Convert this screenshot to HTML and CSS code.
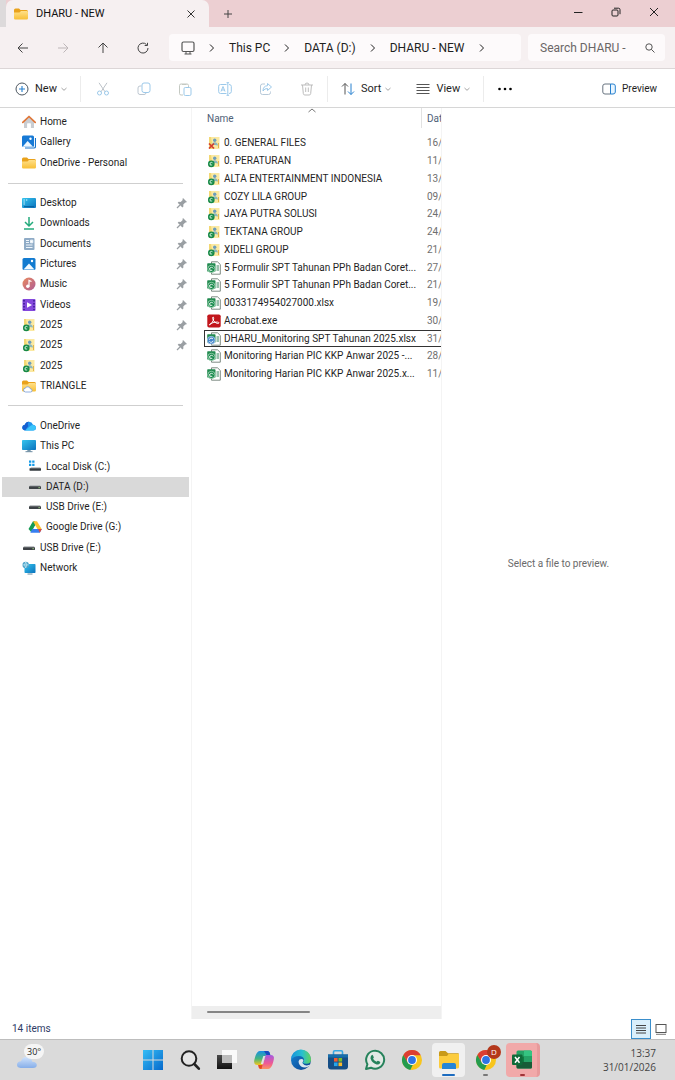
FILE: index.html
```html
<!DOCTYPE html>
<html lang="en">
<head>
<meta charset="utf-8">
<meta name="viewport" content="width=device-width, initial-scale=1">
<title>DHARU - NEW</title>
<link rel="stylesheet" href="styles.css">
</head>
<body>
<svg class="sprite" aria-hidden="true">
  <defs>
    <linearGradient id="g-folder" x1="0" y1="0" x2="0" y2="1"><stop offset="0" stop-color="#ffe08a"/><stop offset="1" stop-color="#f8bf36"/></linearGradient>
    <linearGradient id="g-blue" x1="0" y1="0" x2="1" y2="1"><stop offset="0" stop-color="#36c5ee"/><stop offset="1" stop-color="#0a72bd"/></linearGradient>
    <linearGradient id="g-music" x1="0" y1="0" x2="1" y2="1"><stop offset="0" stop-color="#ea8a5e"/><stop offset="1" stop-color="#ae5c96"/></linearGradient>
    <linearGradient id="g-win" x1="0" y1="0" x2="1" y2="1"><stop offset="0" stop-color="#35bdf5"/><stop offset="1" stop-color="#0669cc"/></linearGradient>
    <linearGradient id="g-edge" x1="0" y1="0" x2="1" y2="0"><stop offset="0" stop-color="#1593dc"/><stop offset=".55" stop-color="#28bfd0"/><stop offset="1" stop-color="#62d45c"/></linearGradient>
    <linearGradient id="g-edge2" x1="0" y1="0" x2="1" y2="1"><stop offset="0" stop-color="#1686d5"/><stop offset="1" stop-color="#0b3f8c"/></linearGradient>
    <linearGradient id="g-cop1" x1="0" y1="0" x2="0" y2="1"><stop offset="0" stop-color="#178ee5"/><stop offset=".55" stop-color="#46b67d"/><stop offset="1" stop-color="#f4c51c"/></linearGradient>
    <linearGradient id="g-cop2" x1="0" y1="0" x2="0" y2="1"><stop offset="0" stop-color="#a45ae0"/><stop offset=".6" stop-color="#ef5a94"/><stop offset="1" stop-color="#fb9360"/></linearGradient>
    <linearGradient id="g-cloud" x1="0" y1="0" x2="0" y2="1"><stop offset="0" stop-color="#cfe2fb"/><stop offset="1" stop-color="#86aee9"/></linearGradient>
    <linearGradient id="g-task" x1="0" y1="0" x2="0" y2="1"><stop offset="0" stop-color="#4a4a4a"/><stop offset="1" stop-color="#111"/></linearGradient>
  </defs>
  <symbol id="i-folder" viewBox="0 0 14 14"><path d="M0 3q0-1.500 1.500-1.500h3.500l1.500 1.500h6q1.500 0 1.500 1.500v2H0z" fill="#e9a21c"/><path d="M0 5.500h5.500L7 4h5.800Q14 4 14 5.200v6q0 1.300-1.300 1.300H1.300Q0 12.500 0 11.200z" fill="url(#g-folder)"/></symbol>
  <symbol id="i-home" viewBox="0 0 14 14"><path d="M2 6.500 7 2l5 4.500V13H8.700V8.500H5.300V13H2z" fill="#c9cdd2"/><path d="M5.300 8.500h3.400V13H5.300z" fill="#fff"/><path d="M.8 7.300 7 1.500l6.200 5.800" fill="none" stroke="#df7536" stroke-width="1.700" stroke-linecap="round" stroke-linejoin="round"/></symbol>
  <symbol id="i-gallery" viewBox="0 0 14 14"><path d="M3 13h9q1.500 0 1.500-1.500V3" fill="none" stroke="#1672c9" stroke-width="1.200"/><rect x="0" y=".5" width="12" height="11.500" rx="1.500" fill="#1679d5"/><path d="m.6 11.700 5-5.700 5.400 5.700z" fill="#eef8ff"/><circle cx="8.500" cy="3.700" r="1.200" fill="#fff"/></symbol>
  <symbol id="i-desktop" viewBox="0 0 14 14"><rect y="2" width="14" height="10" rx="1" fill="url(#g-blue)"/><path d="M1.500 4h1.300M1.500 6h1.300M1.500 8h1.300M4 4h1.300" stroke="#dff6ff"/><path d="M2 10.700h10" stroke="#075a99"/></symbol>
  <symbol id="i-download" viewBox="0 0 14 14"><path d="M7 1v8.700M3 6l4 4 4-4M2 13h10" fill="none" stroke="#24ab7c" stroke-width="1.500"/></symbol>
  <symbol id="i-doc" viewBox="0 0 14 14"><rect x="2" y="1" width="10.500" height="12" rx="1" fill="#8fabc6"/><path d="M4 3.500h3M4 5.500h3M4 8h6.500M4 10.500h6.500M8.500 3.200h2.300v2.600H8.500z" stroke="#eef5fb" fill="#fff"/></symbol>
  <symbol id="i-pictures" viewBox="0 0 14 14"><rect x=".5" y="1" width="13" height="12" rx="1.500" fill="#127bd0"/><path d="M1.500 12.500 7 6.500l5.500 6z" fill="#f2faff"/><circle cx="10" cy="4" r="1.200" fill="#fff"/></symbol>
  <symbol id="i-music" viewBox="0 0 14 14"><circle cx="7" cy="7" r="6.500" fill="url(#g-music)"/><path d="M7 9.500V3.500l2.500 1" fill="none" stroke="#fff" stroke-width="1.200"/><circle cx="5.800" cy="9.300" r="1.700" fill="#fff"/></symbol>
  <symbol id="i-videos" viewBox="0 0 14 14"><rect x=".5" y="1" width="13" height="12" rx="1" fill="#8348dc"/><path d="M2 2v10M12 2v10" stroke="#35148d" stroke-width="1.400" stroke-dasharray="1.500 1.500"/><path d="M5 4.200v5.600L10 7z" fill="#fff"/></symbol>
  <symbol id="i-user" viewBox="0 0 14 14"><path d="M2 1H8v12H2z" fill="#f3d873"/><path d="M4 1h8.500v12H6z" fill="#fbe9a2"/><circle cx="7.700" cy="4.200" r="1.700" fill="#6c9dbc"/><path d="M4.700 8.500Q5.500 6 8 6.200t3 3.300z" fill="#8fb8bd"/><path d="M11.500 7v5" stroke="#e4b64a"/></symbol>
  <symbol id="i-sync" viewBox="0 0 14 14"><use href="#i-user"/><circle cx="4.300" cy="9.900" r="3.300" fill="#168947"/><path d="M3 9.200a1.500 1.500 0 0 1 2.700 0M3.200 9v2h2" fill="none" stroke="#d7f4df" stroke-width=".9"/></symbol>
  <symbol id="i-error" viewBox="0 0 14 14"><use href="#i-user"/><path d="m2 7.500 5 5m0-5-5 5" stroke="#d43c2c" stroke-width="1.700"/></symbol>
  <symbol id="i-cloudfolder" viewBox="0 0 14 14"><use href="#i-folder"/><path d="M3.500 13q-2-.3-2-2T3.400 9.200Q4 7.500 6 7.800t2.300 2q1.900.2 1.700 1.800T8.500 13z" fill="#fff" stroke="#729bdb" stroke-width=".8"/></symbol>
  <symbol id="i-onedrive" viewBox="0 0 14 14"><path d="M3.200 11.500Q0 11 .2 8.500t2.500-2.700Q4 2.600 7 2.800t4 3q2.900.4 3 3t-2.700 2.700z" fill="#2095ed"/><path d="M3 11.500 8 7.200q1.500-1.500 3.200-1.200 2.700.5 2.800 2.800t-2.700 2.700z" fill="#3bc4fa"/><path d="M.3 8q.3-2 2.500-2.200Q4 2.700 7 2.800 5 4 6.300 7L3 11.400Q.2 11 .3 8z" fill="#165fd0"/></symbol>
  <symbol id="i-pc" viewBox="0 0 14 14"><rect y="1" width="14" height="10" rx=".8" fill="url(#g-blue)"/><path d="M5.500 11h3l.5 1.500H5z" fill="#7895a7"/><path d="M3.500 12.700h7" stroke="#6b8ba0"/></symbol>
  <symbol id="i-localdisk" viewBox="0 0 14 14"><path d="M1 .5h2.300v2.300H1zM4.200.5h2.300v2.300H4.200zM1 3.700h2.300V6H1zM4.200 3.700h2.300V6H4.200z" fill="#159be8"/><path d="M3 7.200h9l1 1.400H2z" fill="#aeb2b5"/><rect x="1.500" y="8.200" width="11.500" height="2.500" rx=".4" fill="#343b40"/></symbol>
  <symbol id="i-drive" viewBox="0 0 14 14"><path d="M2 5.300h10l1 1.400H1z" fill="#aeb2b5"/><rect x="1" y="6.300" width="12" height="2.700" rx=".4" fill="#3c4145"/><path d="M10.500 7.700h1.300" stroke="#a8e58c"/></symbol>
  <symbol id="i-gdrive" viewBox="0 0 14 14"><path d="M5 1.200h2.100v4L3.300 12.200.5 9z" fill="#159b54"/><path d="M5 1.200h4l4.800 8H9.600z" fill="#fbc32e"/><path d="M4.200 9h9.600l-2 3.700H2.300z" fill="#377ef0"/><path d="M10 9h3.800l-2 3.700z" fill="#df493c"/></symbol>
  <symbol id="i-network" viewBox="0 0 14 14"><rect x="2.500" y="3" width="11" height="9" rx=".7" fill="url(#g-blue)"/><path d="M5.500 13h5" stroke="#63889e"/><circle cx="3.700" cy="3.900" r="3.200" fill="#4da2c8"/><path d="M.7 3.900h6M3.700.9Q1.500 3.900 3.700 6.900 6 3.900 3.700.9" fill="none" stroke="#c9edf6" stroke-width=".7"/></symbol>
  <symbol id="i-pin" viewBox="0 0 12 12"><path d="M7 1 11 5l-1.100.6-.6-.2-2 2 .1 2-1 1L1.700 5.800l1-1 2 .1 2-2-.2-.8z" fill="#9a9fa3"/><path d="m4 8-3 3" stroke="#9a9fa3" stroke-width="1.200"/></symbol>
  <symbol id="i-xlsx" viewBox="0 0 14 14"><path d="M4.500.8h6L13.300 3.500v9.700H4.500z" fill="#fff" stroke="#6f7f76" stroke-width=".9"/><path d="M9.500 5h2.500M9.500 7h2.500M9.500 9h2.500" stroke="#37835b"/><rect x=".2" y="2.300" width="8.300" height="8.300" rx=".7" fill="#218a4f"/></symbol>
  <symbol id="i-xlsok" viewBox="0 0 14 14"><use href="#i-xlsx"/><circle cx="4.400" cy="7.900" r="3.600" fill="#16894b" stroke="#bce4c9" stroke-width=".7"/><path d="M2.700 7.500a1.900 1.900 0 0 1 3.500 0M2.800 7v2.300h2.500" fill="none" stroke="#fff" stroke-width=".9"/></symbol>
  <symbol id="i-xlssync" viewBox="0 0 14 14"><use href="#i-xlsx"/><circle cx="4.200" cy="8.200" r="3.900" fill="#4084c9" stroke="#d2e5f7" stroke-width=".6"/><path d="M2.300 7.700a2 2 0 0 1 3.700-.6M6.100 8.700a2 2 0 0 1-3.700.6" fill="none" stroke="#fff"/></symbol>
  <symbol id="i-acrobat" viewBox="0 0 14 14"><rect x=".3" y=".5" width="13.400" height="13" rx="1.800" fill="#c2161c"/><path d="M2.500 10.800c2-1 4.200-4 4.200-6.500 0-2-1.500-1.500-1 .2.600 2.800 3 4.800 5 5 1.800 0 1.600-1.300 0-1.400-2.500-.2-5.200.5-7.200 1.700-1.700 1-1.500 1.600-1 1z" fill="none" stroke="#fff"/></symbol>
  <symbol id="i-chev" viewBox="0 0 10 10"><path d="m3 1.500 3.500 3.500L3 8.500" fill="none" stroke="currentColor"/></symbol>
  <symbol id="i-down" viewBox="0 0 8 8"><path d="m1.500 3 2.500 2.300L6.500 3" fill="none" stroke="#999" stroke-width=".9"/></symbol>
  <symbol id="i-chrome" viewBox="0 0 22 22"><circle cx="11" cy="11" r="10" fill="#f8c51c"/><path d="M11 11 6.500 13.700 2.300 6A10 10 0 0 1 19.800 6.200H11z" fill="#dc3e32"/><path d="M2.300 6 6.700 13.500Q8.300 16 11.700 15.900L9.300 20.900A10 10 0 0 1 2.300 6z" fill="#249b4e"/><circle cx="11" cy="11" r="5" fill="#fff"/><circle cx="11" cy="11" r="3.900" fill="#2f74e4"/></symbol>
</svg>

<header class="titlebar">
  <div class="tab">
    <svg class="ico"><use href="#i-folder"/></svg><span>DHARU - NEW</span>
    <button class="plain tab-close" aria-label="Close tab"><svg width="10" height="10" viewBox="0 0 10 10"><path d="m1.500 1.500 7 7m0-7-7 7" stroke="#333"/></svg></button>
  </div>
  <button class="plain newtab" aria-label="New tab"><svg width="10" height="10" viewBox="0 0 10 10"><path d="M5 1v8M1 5h8" stroke="#444"/></svg></button>
  <div class="winctl">
    <button class="plain" aria-label="Minimize"><svg width="10" height="10" viewBox="0 0 10 10"><path d="M1 5.500h8.500" stroke="#222"/></svg></button>
    <button class="plain" aria-label="Restore"><svg width="10" height="10" viewBox="0 0 10 10"><rect x="1" y="3" width="6" height="6" rx="1" fill="none" stroke="#222"/><path d="M3 1.200h4.500q1.500 0 1.500 1.500v4.500" fill="none" stroke="#222"/></svg></button>
    <button class="plain" aria-label="Close"><svg width="10" height="10" viewBox="0 0 10 10"><path d="m1 1 8 8m0-8-8 8" stroke="#222"/></svg></button>
  </div>
</header>

<nav class="navbar" aria-label="Address">
  <div class="navbtns">
    <button class="plain" aria-label="Back"><svg width="12" height="12" viewBox="0 0 12 12"><path d="M11 6H1M5.500 1.500 1 6l4.500 4.500" fill="none" stroke="#444"/></svg></button>
    <button class="plain" aria-label="Forward"><svg width="12" height="12" viewBox="0 0 12 12"><path d="M1 6h10M6.500 1.500 11 6l-4.500 4.500" fill="none" stroke="#bdb6b8"/></svg></button>
    <button class="plain" aria-label="Up"><svg width="12" height="12" viewBox="0 0 12 12"><path d="M6 11V1M1.500 5.500 6 1l4.500 4.500" fill="none" stroke="#444"/></svg></button>
    <button class="plain" aria-label="Refresh"><svg width="12" height="12" viewBox="0 0 12 12"><path d="M11 6a5 5 0 1 1-1.500-3.500M10.500.8v2.700H7.700" fill="none" stroke="#444"/></svg></button>
  </div>
  <div class="crumbs">
    <svg width="14" height="14" viewBox="0 0 14 14"><rect x="1" y="1" width="12" height="9.500" rx="1.500" fill="none" stroke="#555" stroke-width="1.200"/><path d="M5 10.500V13m4-2.500V13M3.500 13h7" stroke="#555" fill="none"/></svg>
    <svg class="chev"><use href="#i-chev"/></svg><a href="#">This PC</a>
    <svg class="chev"><use href="#i-chev"/></svg><a href="#">DATA (D:)</a>
    <svg class="chev"><use href="#i-chev"/></svg><a href="#">DHARU - NEW</a>
    <svg class="chev"><use href="#i-chev"/></svg>
  </div>
  <label class="search"><input type="text" placeholder="Search DHARU -" aria-label="Search"><svg width="10" height="10" viewBox="0 0 10 10"><circle cx="4" cy="4" r="3.200" fill="none" stroke="#555"/><path d="m6.300 6.300 3.200 3.200" stroke="#555"/></svg></label>
</nav>

<div class="toolbar">
  <button class="plain cmd new"><svg width="14" height="14" viewBox="0 0 14 14"><circle cx="7" cy="7" r="6" fill="none" stroke="#4c5660"/><path d="M7 4v6M4 7h6" stroke="#2680cf" stroke-width="1.100"/></svg>New<svg class="down"><use href="#i-down"/></svg></button>
  <div class="edit">
    <button class="plain" aria-label="Cut"><svg width="14" height="14" viewBox="0 0 14 14"><path d="m3 .8 6 9M11 .8l-6 9" stroke="#bcc2c8"/><circle cx="3.500" cy="11" r="2" fill="none" stroke="#9cc9ea"/><circle cx="10.500" cy="11" r="2" fill="none" stroke="#9cc9ea"/></svg></button>
    <button class="plain" aria-label="Copy"><svg width="14" height="14" viewBox="0 0 14 14"><rect x="5" y="1" width="8" height="9.500" rx="2" fill="none" stroke="#9cc9ea"/><path d="M4.500 4H3Q1 4 1 6v4.500q0 2 2 2h4q1.800 0 2-1.500" fill="none" stroke="#bcc6d0"/></svg></button>
    <button class="plain" aria-label="Paste"><svg width="14" height="14" viewBox="0 0 14 14"><path d="M5 13H3q-1.500 0-1.500-1.500v-8Q1.500 2 3 2h6q1.500 0 1.500 1.500V5M4 2.500h4.500" fill="none" stroke="#c4c9c2"/><rect x="6" y="5.500" width="7" height="8" rx="1.300" fill="none" stroke="#9cc9ea"/></svg></button>
    <button class="plain" aria-label="Rename"><svg width="14" height="14" viewBox="0 0 14 14"><path d="M8.500 2.500H2.500Q.7 2.500.7 4.300v5.400q0 1.800 1.800 1.800h6M11 2.500q2.300 0 2.300 1.800v5.400q0 1.800-2.300 1.800M9.800.7v12.600M8.500.7h2.600M8.500 13.300h2.600M3 9.500l2-5 2 5M3.700 8h2.600" fill="none" stroke="#9cc9ea"/></svg></button>
    <button class="plain" aria-label="Share"><svg width="14" height="14" viewBox="0 0 14 14"><path d="M6 2H3.500Q1.500 2 1.500 4v6.500q0 2 2 2h6q2 0 2-2V9.500" fill="none" stroke="#b7c9d8"/><path d="M8.500 1.500 12.500 5l-4 3.500v-2Q5.500 6.300 4 9q0-5 4.500-5.300z" fill="none" stroke="#9cc9ea"/></svg></button>
    <button class="plain" aria-label="Delete"><svg width="14" height="14" viewBox="0 0 14 14"><path d="M1 3h12M5 3q0-2 2-2t2 2M2.500 3l.8 8.500q.2 1.500 1.500 1.500h4.400q1.300 0 1.500-1.500L11.500 3M5.700 5.500v4.500M8.300 5.500v4.500" fill="none" stroke="#bdbdbd"/></svg></button>
  </div>
  <button class="plain cmd sort"><svg width="14" height="14" viewBox="0 0 14 14"><path d="M4 12.500V1.500M1 4.500l3-3 3 3" fill="none" stroke="#555"/><path d="M10 1.500v11M7 9.500l3 3 3-3" fill="none" stroke="#2680cf"/></svg>Sort<svg class="down"><use href="#i-down"/></svg></button>
  <button class="plain cmd view"><svg width="14" height="14" viewBox="0 0 14 14"><path d="M.5 2.500h13M.5 5.500h13M.5 8.500h13M.5 11.500h13" stroke="#555"/></svg>View<svg class="down"><use href="#i-down"/></svg></button>
  <button class="plain more" aria-label="More"><svg width="14" height="4" viewBox="0 0 14 4"><circle cx="1.500" cy="2" r="1.300"/><circle cx="7" cy="2" r="1.300"/><circle cx="12.500" cy="2" r="1.300"/></svg></button>
  <button class="plain cmd preview-btn"><svg width="14" height="14" viewBox="0 0 14 14"><path d="M8.500 2H3Q.8 2 .8 4v6Q.8 12 3 12h5.500" fill="none" stroke="#687480"/><path d="M8.500 2H11q2.300 0 2.300 2v6q0 2-2.300 2H8.500z" fill="#e8f5ff" stroke="#2680cf"/></svg>Preview</button>
</div>

<main class="main">
  <aside class="side">
    <ul class="tree tree-top">
      <li><a href="#"><svg class="ico"><use href="#i-home"/></svg>Home</a></li>
      <li><a href="#"><svg class="ico"><use href="#i-gallery"/></svg>Gallery</a></li>
      <li><a href="#"><svg class="ico"><use href="#i-folder"/></svg>OneDrive - Personal</a></li>
    </ul>
    <ul class="tree tree-quick">
      <li><a href="#"><svg class="ico"><use href="#i-desktop"/></svg>Desktop<svg class="pin"><use href="#i-pin"/></svg></a></li>
      <li><a href="#"><svg class="ico"><use href="#i-download"/></svg>Downloads<svg class="pin"><use href="#i-pin"/></svg></a></li>
      <li><a href="#"><svg class="ico"><use href="#i-doc"/></svg>Documents<svg class="pin"><use href="#i-pin"/></svg></a></li>
      <li><a href="#"><svg class="ico"><use href="#i-pictures"/></svg>Pictures<svg class="pin"><use href="#i-pin"/></svg></a></li>
      <li><a href="#"><svg class="ico"><use href="#i-music"/></svg>Music<svg class="pin"><use href="#i-pin"/></svg></a></li>
      <li><a href="#"><svg class="ico"><use href="#i-videos"/></svg>Videos<svg class="pin"><use href="#i-pin"/></svg></a></li>
      <li><a href="#"><svg class="ico"><use href="#i-sync"/></svg>2025<svg class="pin"><use href="#i-pin"/></svg></a></li>
      <li><a href="#"><svg class="ico"><use href="#i-sync"/></svg>2025<svg class="pin"><use href="#i-pin"/></svg></a></li>
      <li><a href="#"><svg class="ico"><use href="#i-sync"/></svg>2025</a></li>
      <li><a href="#"><svg class="ico"><use href="#i-cloudfolder"/></svg>TRIANGLE</a></li>
    </ul>
    <ul class="tree tree-drives">
      <li><a href="#"><svg class="ico"><use href="#i-onedrive"/></svg>OneDrive</a></li>
      <li><a href="#"><svg class="ico"><use href="#i-pc"/></svg>This PC</a></li>
      <li class="nested"><a href="#"><svg class="ico"><use href="#i-localdisk"/></svg>Local Disk (C:)</a></li>
      <li class="nested current"><a href="#"><svg class="ico"><use href="#i-drive"/></svg>DATA (D:)</a></li>
      <li class="nested"><a href="#"><svg class="ico"><use href="#i-drive"/></svg>USB Drive (E:)</a></li>
      <li class="nested"><a href="#"><svg class="ico"><use href="#i-gdrive"/></svg>Google Drive (G:)</a></li>
      <li><a href="#"><svg class="ico"><use href="#i-drive"/></svg>USB Drive (E:)</a></li>
      <li><a href="#"><svg class="ico"><use href="#i-network"/></svg>Network</a></li>
    </ul>
  </aside>

  <section class="files">
    <svg class="caret" width="8" height="5" viewBox="0 0 8 5"><path d="m.5 4 3.500-3 3.500 3" fill="none" stroke="#777"/></svg>
    <div class="list">
      <table>
        <thead><tr><th>Name</th><th>Dat</th></tr></thead>
        <tbody>
          <tr><td><svg class="ico"><use href="#i-error"/></svg>0. GENERAL FILES</td><td>16/</td></tr>
          <tr><td><svg class="ico"><use href="#i-sync"/></svg>0. PERATURAN</td><td>11/</td></tr>
          <tr><td><svg class="ico"><use href="#i-sync"/></svg>ALTA ENTERTAINMENT INDONESIA</td><td>13/</td></tr>
          <tr><td><svg class="ico"><use href="#i-sync"/></svg>COZY LILA GROUP</td><td>09/</td></tr>
          <tr><td><svg class="ico"><use href="#i-sync"/></svg>JAYA PUTRA SOLUSI</td><td>24/</td></tr>
          <tr><td><svg class="ico"><use href="#i-sync"/></svg>TEKTANA GROUP</td><td>24/</td></tr>
          <tr><td><svg class="ico"><use href="#i-sync"/></svg>XIDELI GROUP</td><td>21/</td></tr>
          <tr><td><svg class="ico"><use href="#i-xlsok"/></svg>5 Formulir SPT Tahunan PPh Badan Coret...</td><td>27/</td></tr>
          <tr><td><svg class="ico"><use href="#i-xlsok"/></svg>5 Formulir SPT Tahunan PPh Badan Coret...</td><td>21/</td></tr>
          <tr><td><svg class="ico"><use href="#i-xlsok"/></svg>0033174954027000.xlsx</td><td>19/</td></tr>
          <tr><td><svg class="ico"><use href="#i-acrobat"/></svg>Acrobat.exe</td><td>30/</td></tr>
          <tr class="focused"><td><svg class="ico"><use href="#i-xlssync"/></svg>DHARU_Monitoring SPT Tahunan 2025.xlsx</td><td>31/</td></tr>
          <tr><td><svg class="ico"><use href="#i-xlsok"/></svg>Monitoring Harian PIC KKP Anwar 2025 -...</td><td>28/</td></tr>
          <tr><td><svg class="ico"><use href="#i-xlsok"/></svg>Monitoring Harian PIC KKP Anwar 2025.x...</td><td>11/</td></tr>
        </tbody>
      </table>
    </div>
    <div class="hscroll"><div class="thumb"></div></div>
  </section>

  <section class="preview"><p>Select a file to preview.</p></section>
</main>

<footer class="status">
  <span>14 items</span>
  <div class="modes">
    <button class="plain mode on" aria-label="Details view"><svg width="12" height="12" viewBox="0 0 12 12"><path d="M1 2.500h10M1 5h10M1 7.500h10M1 10h10" stroke="#444"/></svg></button>
    <button class="plain mode" aria-label="Large icons view"><svg width="12" height="12" viewBox="0 0 12 12"><rect x="1" y="1.500" width="10" height="8" fill="none" stroke="#555"/><path d="M1 11.300h10" stroke="#777"/></svg></button>
  </div>
</footer>

<div class="taskbar">
  <button class="plain weather" aria-label="Weather 30°"><svg width="22" height="16" viewBox="0 0 22 16"><path d="M4.500 15Q.8 14.500 1 11.500t4-3.200Q6.500 3.500 11 4t5.300 4.800q4.500.2 4.500 3.200T17 15z" fill="url(#g-cloud)"/></svg><span class="temp">30°</span></button>
  <div class="apps">
    <button class="plain app" aria-label="Start"><svg viewBox="0 0 22 22"><path d="M1 1h9.500v9.500H1zM11.500 1H21v9.500h-9.500zM1 11.500h9.500V21H1zM11.500 11.500H21V21h-9.500z" fill="url(#g-win)"/></svg></button>
    <button class="plain app" aria-label="Search"><svg viewBox="0 0 22 22"><circle cx="10" cy="9.500" r="7.300" fill="#e4e4e4" stroke="#222" stroke-width="2"/><path d="m15.300 15 4.500 4.700" stroke="#222" stroke-width="2.600" stroke-linecap="round"/></svg></button>
    <button class="plain app" aria-label="Task view"><svg viewBox="0 0 22 22"><path d="M1 6h15v14H1z" fill="url(#g-task)"/><path d="M6 1h15v13H6z" fill="#fff" opacity=".85"/><path d="M6 6h10v8H6z" fill="#bdbdbd"/></svg></button>
    <button class="plain app" aria-label="Copilot"><svg viewBox="0 0 22 22"><path d="M7 2h7.500q1.500 0 2 1.500l.8 2.500h-3q-1.500 0-2 1.500L9.500 16H4.500Q.5 16 1.200 11.500 2.500 5 4.500 3.200 5.500 2 7 2z" fill="url(#g-cop1)"/><path d="M15 20H8q-1.700 0-2.200-1.600L5.200 16h3q1.500 0 2-1.500L12.700 6h4.800q4.300 0 3.300 4.500-1.300 6.500-3.300 8.300Q16.500 20 15 20z" fill="url(#g-cop2)"/><path d="M11 2h3.500q1.500 0 2 1.500l.8 2.500h-3.800z" fill="#1749c0"/><path d="M5.200 16h4.300l-1 4q-2.200 0-2.700-1.600z" fill="#e44b20"/><path d="M10.300 7h2L10 15H7.800z" fill="#e3e1e2"/></svg></button>
    <button class="plain app" aria-label="Edge"><svg viewBox="0 0 22 22"><circle cx="11" cy="11" r="10" fill="url(#g-edge2)"/><path d="M1 11A10 10 0 0 1 21 10q.2 4.700-4.500 4.800-3 0-3.700-1.300 1.500-1 1.200-3Q13.500 7.300 9 7 3.500 7 1 11z" fill="url(#g-edge)"/><path d="M9.500 10.500Q8 12 8.800 14.300q1.500 4.200 6.200 4.200 2.700-.2 4.300-1.800.8-.7.200-1-4.500 2-6.700-1.200-.9-1 .4-2.200.7-1.500-.5-2-1.700-.6-3.200.2z" fill="#d9e6ee"/></svg></button>
    <button class="plain app" aria-label="Store"><svg viewBox="0 0 22 22"><path d="M6.500 6V3q0-1.300 1.300-1.300h6.400q1.300 0 1.300 1.300v3" fill="none" stroke="#36a8e4" stroke-width="1.600"/><path d="M1 5.500h20v12q0 3-3 3H4q-3 0-3-3z" fill="#164e86"/><path d="M1 5.500h20v3H1z" fill="#176eab"/><path d="M7 9h3.600v3.600H7z" fill="#f25a2f"/><path d="M11.500 9h3.600v3.600h-3.600z" fill="#7dbb2d"/><path d="M7 13.500h3.600v3.600H7z" fill="#28a5eb"/><path d="M11.500 13.500h3.600v3.600h-3.600z" fill="#fbba2c"/></svg></button>
    <button class="plain app" aria-label="WhatsApp"><svg viewBox="0 0 22 22"><path d="m2 20 1.400-4.700A9 9 0 1 1 7 18.700z" fill="#e3e9e5" stroke="#26825b" stroke-width="2" stroke-linejoin="round"/><path d="M7.500 6.200q1-.8 1.500.2l.8 1.800q.1.600-.8 1.500 1.200 2.200 3.600 3.100.9-1.200 1.400-1.100l2 1q.6.500 0 1.500-1.200 1.700-3.300 1.200-4.800-1.400-6.200-5.900-.1-2 1-3.300z" fill="#26825b"/></svg></button>
    <button class="plain app" aria-label="Chrome"><svg viewBox="0 0 22 22"><use href="#i-chrome"/></svg></button>
    <button class="plain app active" aria-label="File Explorer"><svg viewBox="0 0 22 22"><path d="M1 3.500Q1 2 2.500 2h5L10 4.200h10q1 0 1 1V10H1z" fill="#c99a19"/><path d="M1 7h8l1.500-2H21v13q0 1.500-1.500 1.500h-17Q1 19.500 1 18z" fill="#fccc3e"/><path d="M4 20v-4q0-2 2-2h10q2 0 2 2v4z" fill="#2485d8"/></svg><i class="run wide"></i></button>
    <button class="plain app" aria-label="Chrome profile D"><svg viewBox="0 0 22 22"><use href="#i-chrome"/></svg><span class="badge">D</span><i class="run"></i></button>
    <button class="plain app alert" aria-label="Excel"><svg viewBox="0 0 22 22"><rect x="5.500" y="1.500" width="15.500" height="18" rx="1.500" fill="#25a366"/><path d="M13 1.500h6.500q1.500 0 1.500 1.500v4h-8z" fill="#35c481"/><path d="M5.500 7.500H13V13H5.500z" fill="#107c41"/><path d="M5.500 13H21v5q0 1.500-1.500 1.500H7q-1.500 0-1.500-1.500z" fill="#185c37"/><rect x="1" y="5.500" width="10.500" height="10.500" rx="1" fill="#0f6b39"/><path d="m4 8 4.500 5.700M8.500 8 4 13.700" stroke="#fff" stroke-width="1.500"/></svg><i class="run red"></i></button>
  </div>
  <div class="clock"><time>13:37</time><time>31/01/2026</time></div>
</div>
</body>
</html>
```
FILE: styles.css
```css
* { box-sizing: border-box; }
html, body { height: 100%; }
body {
  margin: 0;
  display: flex;
  flex-direction: column;
  background: #fff;
  color: #1f1f1f;
  font: 10px/16px Roboto, "Noto Sans", sans-serif;
}
svg { display: block; flex: none; }
a { color: inherit; text-decoration: none; }
.sprite { position: absolute; width: 0; height: 0; }
.plain {
  border: 0;
  padding: 0;
  background: none;
  color: inherit;
  font: inherit;
  display: flex;
  align-items: center;
  justify-content: center;
}
.ico { width: 14px; height: 14px; }

/* Title bar */
.titlebar { display: flex; height: 27px; background: #eccfd2; border-left: 6px solid #dddadb; }
.tab {
  display: flex;
  align-items: center;
  gap: 8px;
  width: 203px;
  padding: 1px 13px 0 8px;
  background: #f6f0f1;
  border-radius: 7px 7px 0 0;
  font-size: 11px;
  color: #111;
}
.tab-close { margin-left: auto; }
.newtab { width: 38px; }
.winctl { display: flex; margin-left: auto; padding: 0 2px 3px 0; }
.winctl .plain { width: 38px; }

/* Address row */
.navbar {
  display: flex;
  align-items: center;
  height: 42px;
  padding-right: 10px;
  background: #f6f0f1;
  border-bottom: 1px solid #dcd6d7;
  font-size: 12px;
  line-height: 18px;
}
.navbtns { display: flex; padding-left: 3px; margin-right: 6px; }
.navbtns .plain { width: 40px; height: 28px; }
.crumbs {
  display: flex;
  align-items: center;
  flex: 1;
  height: 27px;
  padding-left: 12px;
  background: #fdfafb;
  border-radius: 4px;
  white-space: nowrap;
  overflow: hidden;
}
.chev { width: 10px; height: 10px; margin: 0 12px; }
.search {
  display: flex;
  align-items: center;
  width: 137px;
  height: 27px;
  margin-left: 7px;
  padding: 0 10px 0 12px;
  background: #fdfafb;
  border-radius: 4px;
}
.search input { flex: 1; min-width: 0; padding: 0; border: 0; background: none; font: inherit; }
.search input::placeholder { color: #6b6667; opacity: 1; }

/* Command bar */
.toolbar { display: flex; align-items: center; height: 39px; padding: 2px 18px 0 15px; border-bottom: 1px solid #d6d6d6; }
.cmd { gap: 6px; font-size: 11px; }
.down { width: 8px; height: 8px; margin-left: -3px; }
.new { width: 66px; height: 26px; justify-content: flex-start; border-right: 1px solid #ececec; }
.edit { display: flex; width: 247px; height: 26px; padding-left: 2px; border-right: 1px solid #ececec; }
.edit .plain { flex: 1; }
.sort { margin-left: 13px; }
.view { margin-left: 24px; padding-right: 12px; height: 26px; border-right: 1px solid #ececec; }
.more { margin-left: 14px; }
.preview-btn { margin-left: auto; font-size: 10px; }

/* Panes */
.main { display: flex; flex: 1; min-height: 0; }
.side { width: 192px; padding: 4px 2px 0; border-right: 1px solid #f4f4f4; }
.tree { display: flex; flex-direction: column; margin: 0; padding: 0; list-style: none; }
.tree li { display: flex; flex: 1; align-items: stretch; }
.tree a { display: flex; flex: 1; align-items: center; gap: 4px; padding: 0 1px 0 20px; }
.tree .nested a { padding-left: 26px; }
.tree .current { background: #d9d9d9; }
.tree-top { min-height: 61px; }
.tree-quick { min-height: 223px; margin-top: 10px; padding: 10px 0; }
.tree-drives { min-height: 172px; padding-top: 10px; }
.tree-quick::before, .tree-quick::after { content: ""; height: 1px; margin: -10px 6px 9px; background: #cfcfcf; }
.tree-quick::after { margin: 9px 6px -10px; }
.pin { width: 12px; height: 12px; margin-left: auto; }

.files { display: flex; flex-direction: column; width: 250px; position: relative; border-right: 1px solid #f4f4f4; }
.caret { position: absolute; left: 116px; top: 0; }
.list { flex: 1; min-height: 0; overflow: hidden; }
table { width: 238px; margin-left: 12px; border-collapse: separate; border-spacing: 0; table-layout: fixed; }
th { height: 20px; padding: 2px 0 0 3px; text-align: left; font-weight: 400; color: #4f6177; }
thead::after { content: ""; display: block; height: 6px; }
th:first-child { width: 218px; border-right: 1px solid #e2e2e2; }
th:last-child { padding-left: 5px; }
td { height: 18px; padding: 0 0 0 5px; white-space: nowrap; color: #6f6f6f; line-height: 14px; }
tr:nth-child(4n) td { height: 17px; }
td:first-child { padding-left: 3px; color: #1f1f1f; }
td .ico { display: inline-block; margin-right: 3px; vertical-align: top; }
.focused td { box-shadow: inset 0 1px #333, inset 0 -1px #333; }
.focused td:first-child { box-shadow: inset 0 1px #333, inset 0 -1px #333, inset 1px 0 #333; }
.hscroll { height: 13px; padding: 5px 15px; background: #eee; }
.thumb { width: 103px; height: 2px; background: #858585; border-radius: 1px; }

.preview { flex: 1; display: flex; align-items: center; justify-content: center; color: #6a6a6a; }
.preview p { margin: 0; }

/* Status bar */
.status { display: flex; align-items: center; justify-content: space-between; height: 20px; padding: 0 4px 0 12px; color: #2d3b66; }
.modes { display: flex; }
.mode { width: 20px; height: 20px; }
.mode.on { background: #d9effb; border: 1px solid #3a8ecb; }

/* Taskbar */
.taskbar {
  display: flex;
  align-items: center;
  height: 41px;
  padding-right: 19px;
  background: #dadada;
  border-top: 1px solid #bdbdbd;
  font-family: "Open Sans", "Noto Sans", sans-serif;
}
.weather { position: relative; width: 134px; height: 40px; padding: 2px 0 0 16px; justify-content: flex-start; }
.temp { position: absolute; left: 24px; top: 4px; padding: 0 3px; border-radius: 8px; background: #f5f5f5; font-size: 9px; line-height: 15px; }
.apps { display: flex; }
.app { position: relative; width: 33px; height: 34px; margin: 0 2px; border-radius: 4px; }
.app > svg { width: 22px; height: 22px; }
.app.active { background: #f0f0f0; }
.app.alert { width: 34px; background: #f1a9a9; border-right: 3px solid #e79a9b; }
.run { position: absolute; bottom: 1px; left: 14px; width: 5px; height: 2px; border-radius: 1px; background: #777; }
.run.wide { left: 10px; width: 13px; background: #1d6cc0; }
.run.red { background: #a03438; }
.badge { position: absolute; right: 1px; top: 2px; width: 14px; height: 14px; border-radius: 7px; background: #b4371b; color: #fff; font-size: 8px; line-height: 14px; }
.clock { display: flex; flex-direction: column; margin-left: auto; text-align: right; line-height: 14px; color: #444; }
```
